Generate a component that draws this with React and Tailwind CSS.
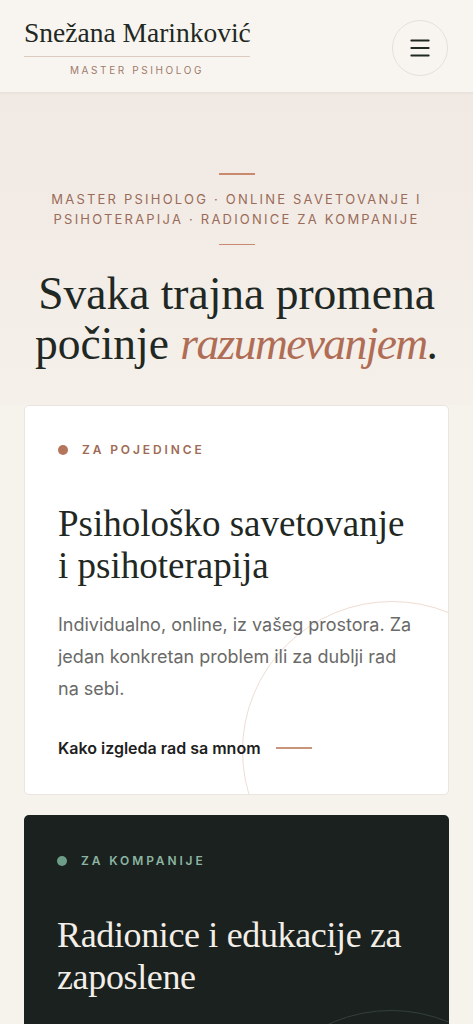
import { Menu } from "lucide-react"

const serif = { fontFamily: '"Liberation Serif", "Times New Roman", serif' }

const Card = ({ dark, label, title, body, link }) => {
  return (
    <div
      className={
        "relative overflow-hidden rounded-[5px] px-[33px] " +
        (dark ? "bg-[#1a211e] pt-[37px] pb-[60px]" : "bg-white border border-[#ebe5df] pt-[35px] pb-[34px]")
      }
    >
      <div
        className={
          "absolute left-[217px] top-[195px] w-[300px] h-[300px] rounded-full border " +
          (dark ? "border-[#34403a]" : "border-[#f0dcd3]")
        }
      />
      <div className="relative flex items-center gap-[14px]">
        <span className={"w-[10px] h-[10px] rounded-full " + (dark ? "bg-[#6d9d89]" : "bg-[#b5755a]")} />
        <span
          className={
            "font-['Inter'] text-[12px] font-semibold tracking-[0.24em] " +
            (dark ? "text-[#8bb5a2]" : "text-[#a06a55]")
          }
        >
          {label}
        </span>
      </div>
      <h2
        style={serif}
        className={
          "relative mt-[44px] leading-[42px] whitespace-nowrap " +
          (dark ? "text-[36px] tracking-[-0.01em] text-[#f3eee7]" : "text-[37px] text-[#1f2823]")
        }
      >
        {title}
      </h2>
      {body && (
        <p className="relative mt-[22px] font-['Inter'] text-[18px] leading-[32px] text-[#6a6a68]">{body}</p>
      )}
      {link && (
        <div className="relative mt-[31px] flex items-center gap-[15px]">
          <span className="font-['Inter'] text-[16px] font-semibold text-[#1e1e1e]">{link}</span>
          <span className="w-[36px] h-[1.5px] bg-[#c9957a]" />
        </div>
      )}
    </div>
  )
}

export default function App() {
  return (
    <div className="min-h-screen bg-[#f6f2ec]">
      <header className="h-[94px] bg-[#f8f5f0] border-b-2 border-[#e9e3dc] flex items-start justify-between pl-[24px] pr-[25px]">
        <div className="pt-[18px] w-[226px]">
          <div style={serif} className="text-[27.5px] leading-[30px] text-[#1f2823] text-center whitespace-nowrap">
            Snežana Marinković
          </div>
          <div className="mt-[8px] h-px bg-[#dccbc0]" />
          <div className="mt-[6px] text-center font-['Inter'] text-[10px] tracking-[0.26em] text-[#a07a6c]">
            MASTER PSIHOLOG
          </div>
        </div>
        <button className="mt-[20px] w-[56px] h-[56px] rounded-full border border-[#e5dfd8] flex items-center justify-center">
          <Menu className="w-[26px] h-[26px] text-[#1f2a24]" strokeWidth={1.8} />
        </button>
      </header>

      <section className="bg-gradient-to-b from-[#f1e9e3] to-[#f5f0ea] pt-[79px] pb-[36px] px-[20px]">
        <div className="flex flex-col items-center">
          <span className="w-[36px] h-[1.5px] bg-[#c98a70]" />
          <p className="mt-[14px] text-center font-['Inter'] text-[13px] leading-[20px] tracking-[0.17em] text-[#9a6b59]">
            MASTER PSIHOLOG · ONLINE SAVETOVANJE I
            <br />
            PSIHOTERAPIJA · RADIONICE ZA KOMPANIJE
          </p>
          <span className="mt-[15px] w-[36px] h-[1.5px] bg-[#c98a70]" />
          <h1 style={serif} className="mt-[24px] text-center text-[45.5px] leading-[50px] text-[#1f2823] whitespace-nowrap">
            Svaka trajna promena
            <br />
            počinje <em className="text-[#b06d55] tracking-[-0.035em]">razumevanjem</em>.
          </h1>
        </div>
      </section>

      <div className="px-[24px] flex flex-col gap-[20px]">
        <Card
          label="ZA POJEDINCE"
          title={<>Psihološko savetovanje<br />i psihoterapija</>}
          body="Individualno, online, iz vašeg prostora. Za jedan konkretan problem ili za dublji rad na sebi."
          link="Kako izgleda rad sa mnom"
        />
        <Card dark label="ZA KOMPANIJE" title={<>Radionice i edukacije za<br />zaposlene</>} />
      </div>
    </div>
  )
}
